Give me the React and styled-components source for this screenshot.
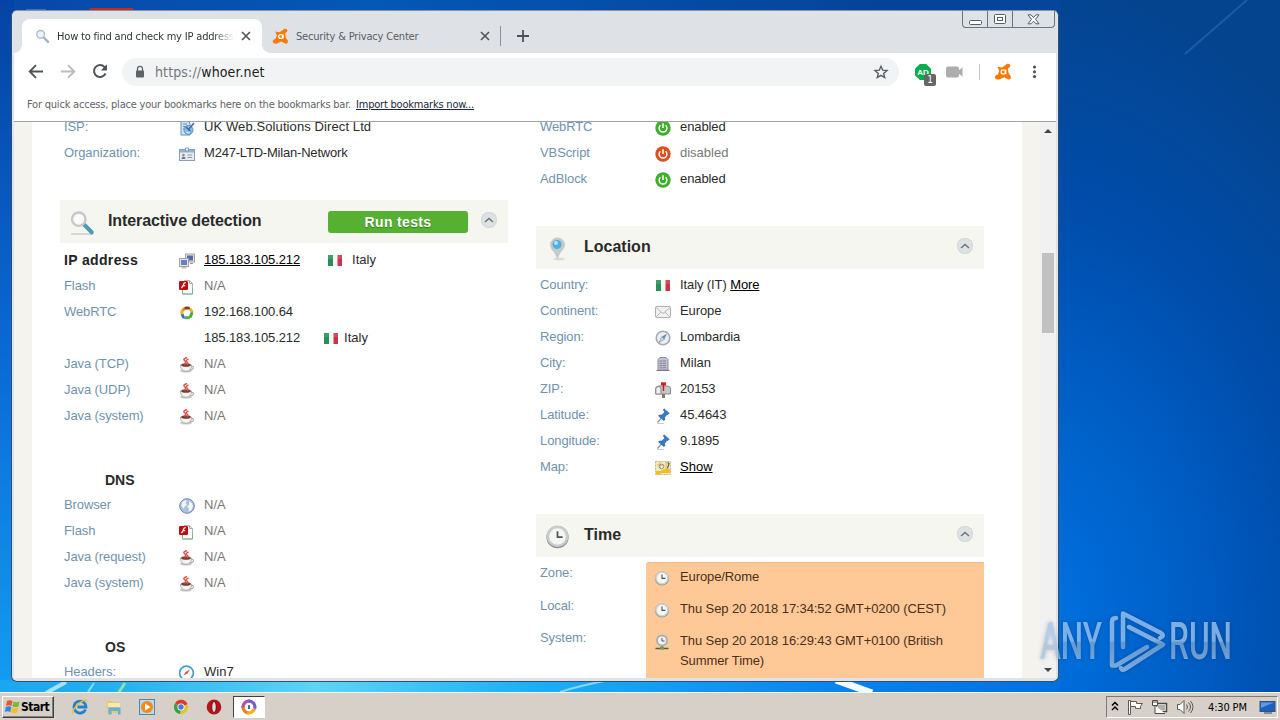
import React from "react";
import styled, {createGlobalStyle, css} from "styled-components";

const UI_FONT = `"DejaVu Sans Condensed", "DejaVu Sans", Tahoma, sans-serif`;
const PAGE_FONT = `"Liberation Sans", Arial, sans-serif`;

const GlobalStyle = createGlobalStyle`
    body {
        margin: 0;
        overflow: hidden;
        background: #0058b8;
    }
    * {
        box-sizing: border-box;
    }
`;

const Desktop = styled.div`
    position: relative;
    width: 1280px;
    height: 720px;
    overflow: hidden;
    display: flex;
    flex-direction: column;
    justify-content: flex-end;
    font-family: ${UI_FONT};
`;

const Wallpaper = styled.svg`
    position: absolute;
    inset: 0;
`;

const Window = styled.div`
    position: absolute;
    left: 11px;
    top: 10px;
    width: 1048px;
    height: 672px;
    display: flex;
    flex-direction: column;
    border: 1px solid #34506e;
    border-top-color: #8a929c;
    border-radius: 6px;
    background: #dfe3e8;
    padding: 0 2px 3px;
    overflow: hidden;
`;

/* tab strip */

const TabStrip = styled.div`
    height: 42px;
    flex: none;
    display: flex;
    align-items: flex-end;
    padding-left: 8px;
    margin: 0 -2px;
    padding-right: 3px;
    background: #dee1e6;
    font-size: 11px;
    letter-spacing: -0.18px;
    color: #5a5e64;
`;

const Tab = styled.div`
    position: relative;
    height: 34px;
    display: flex;
    align-items: center;
    width: ${p => p.$width}px;
    padding: 0 ${p => p.$active ? 11 : 10}px 0 ${p => p.$active ? 13 : 10}px;
    gap: 7px;
    ${p => p.$active && css`
        background: #fff;
        color: #303438;
        border-radius: 8px 8px 0 0;
        margin-left: 2px;
        &::before, &::after {
            content: "";
            position: absolute;
            bottom: 0;
            width: 8px;
            height: 8px;
        }
        &::before {
            left: -8px;
            background: radial-gradient(circle at 0 0, transparent 7.5px, #fff 8px);
        }
        &::after {
            right: -8px;
            background: radial-gradient(circle at 100% 0, transparent 7.5px, #fff 8px);
        }
    `}
`;

const TabTitle = styled.span`
    flex: 1;
    overflow: hidden;
    white-space: nowrap;
    ${p => p.$fade && css`
        mask-image: linear-gradient(90deg, #000 88%, transparent 100%);
    `}
`;

const NewTab = styled.div`
    height: 34px;
    width: 46px;
    display: flex;
    align-items: center;
    gap: 15px;
    &::before {
        content: "";
        width: 1px;
        height: 20px;
        background: #8d9197;
    }
`;

const WindowButtons = styled.div`
    align-self: flex-start;
    margin-left: auto;
    display: flex;
    height: 17px;
    border: 1px solid #6f757e;
    border-top: 0;
    border-radius: 0 0 4px 4px;
`;

const WindowButton = styled.div`
    width: ${p => p.$width}px;
    display: flex;
    align-items: center;
    justify-content: center;
    & + & {
        border-left: 1px solid #6f757e;
    }
`;

/* toolbar */

const Toolbar = styled.div`
    height: 37px;
    flex: none;
    display: flex;
    align-items: center;
    background: #fff;
    padding: 0 12px 0 12px;
    svg {
        flex: none;
    }
`;

const Nav = styled.div`
    display: flex;
    gap: 12px;
    width: 96px;
`;

const Omnibox = styled.div`
    height: 28px;
    width: 777px;
    display: flex;
    align-items: center;
    background: #f1f3f4;
    border-radius: 14px;
    padding: 0 9px 0 10px;
    font-size: 14px;
    letter-spacing: ${p => p.$track}px;
    color: #1c1e20;
`;

const Address = styled.span`
    flex: 1;
    margin-left: 7px;
`;

const Scheme = styled.span`
    color: #74787d;
`;

const Extensions = styled.div`
    display: flex;
    align-items: center;
    padding-left: 15px;
`;

const AdBlockButton = styled.div`
    position: relative;
    width: 32px;
    height: 18px;
`;

const Badge = styled.span`
    position: absolute;
    left: 10px;
    top: 11px;
    width: 12px;
    height: 12px;
    border-radius: 2px;
    background: #666;
    color: #fff;
    font-size: 10px;
    line-height: 12px;
    text-align: center;
`;

const Divider = styled.span`
    width: 1px;
    height: 16px;
    margin: 0 14px 0 15px;
    background: #c4c6c9;
`;

const MenuDots = styled.svg`
    margin-left: 14px;
    fill: #505459;
`;

const BookmarksBar = styled.div`
    height: 32px;
    flex: none;
    background: #fff;
    border-bottom: 1px solid #a3a3a3;
    padding: 7px 13px 0;
    font-size: 11px;
    line-height: 16px;
    letter-spacing: ${p => p.$track}px;
    color: #5f6368;
`;

const ImportLink = styled.span`
    margin-left: 5px;
    color: #20263a;
    text-decoration: underline;
`;

/* page */

const Viewport = styled.div`
    flex: 1;
    min-height: 0;
    display: flex;
    background: #f5f3ee;
    overflow: hidden;
    font-family: ${PAGE_FONT};
    font-size: 13px;
    color: #2b2b2b;
`;

const Sheet = styled.div`
    width: 990px;
    margin: 0 18px;
    padding: 0 38px 0 28px;
    display: flex;
    gap: 28px;
    background: #fff;
`;

const Column = styled.div`
    width: 448px;
    flex: none;
`;

const Pulled = styled.div`
    margin-top: -8px;
    margin-bottom: ${p => p.$gap}px;
`;

const Row = styled.div`
    display: grid;
    grid-template-columns: 115px 25px auto 1fr;
    height: 26px;
    align-items: center;
    padding-left: 4px;
    line-height: 20px;
    white-space: nowrap;
    svg {
        margin-top: 1px;
    }
`;

const Label = styled.span`
    color: ${p => p.$strong ? "#222" : "#6f93ad"};
    font-size: ${p => p.$strong ? 14 : 13}px;
    font-weight: ${p => p.$strong ? 700 : 400};
    letter-spacing: ${p => p.$strong ? 0.35 : -0.1}px;
`;

const Value = styled.span`
    color: ${p => p.$muted ? "#777" : "#2b2b2b"};
    letter-spacing: ${p => p.$track || 0}px;
`;

const Link = styled.span`
    color: #000;
    text-decoration: underline;
    text-underline-offset: 1px;
`;

const Country = styled.span`
    display: flex;
    align-items: center;
    gap: ${p => p.$gap}px;
    margin-left: ${p => p.$left}px;
`;

const Header = styled.div`
    height: 43px;
    display: flex;
    align-items: center;
    background: #f6f6f1;
    padding: 0 11px 3px 9px;
    margin-bottom: ${p => p.$after}px;
`;

const HeaderIcon = styled.span`
    display: flex;
    width: 39px;
    padding-top: 5px;
`;

const Title = styled.span`
    flex: 1;
    padding-top: 2px;
    font-size: 16px;
    font-weight: 700;
    letter-spacing: ${p => p.$track || 0}px;
    color: #2a2a2a;
`;

const RunButton = styled.div`
    width: 140px;
    height: 22px;
    margin: 3px 13px 0 0;
    border-radius: 3px;
    background: #56b032;
    color: #fff;
    font-size: 14px;
    font-weight: 700;
    letter-spacing: 0.35px;
    line-height: 23px;
    text-align: center;
    text-shadow: 0 1px 1px #3a7d20;
`;

const Collapse = styled.span`
    display: flex;
    align-items: center;
    justify-content: center;
    width: 16px;
    height: 16px;
    border-radius: 50%;
    background: #dfe2e4;
    box-shadow: inset 0 0 2px #bcc0c3;
`;

const SubTitle = styled.div`
    height: 22px;
    line-height: 20px;
    margin: ${p => p.$before}px 0 0 45px;
    font-size: 14px;
    font-weight: 700;
`;

const TimeGrid = styled.div`
    display: grid;
    grid-template-columns: 110px 1fr;
`;

const TimeLabels = styled.div`
    display: flex;
    flex-direction: column;
    gap: 12.5px;
    padding: 1px 0 0 4px;
    line-height: 20px;
`;

const Warning = styled.div`
    height: 130px;
    padding: 4px 8px;
    background: #ffc997;
    border-top: 1px solid #efb888;
    border-radius: 3px 0 0 0;
    display: flex;
    flex-direction: column;
    gap: 12px;
    color: #4a2f1a;
    letter-spacing: -0.1px;
`;

const TimeRow = styled.div`
    display: flex;
    gap: 10px;
    line-height: 20px;
    svg {
        flex: none;
        margin-top: 3px;
    }
`;

const Scrollbar = styled.div`
    width: 16px;
    background: #f1f1f1;
    display: flex;
    flex-direction: column;
    align-items: center;
    padding: 6px 0 5px;
`;

const Thumb = styled.div`
    width: 12px;
    height: 80px;
    margin-top: 119px;
    margin-bottom: auto;
    background: #c1c1c1;
`;

/* taskbar */

const Taskbar = styled.div`
    position: relative;
    height: 28px;
    display: flex;
    align-items: center;
    background: #d6d0c8;
    border-top: 1px solid #f7f5f0;
    padding: 1px 2px 0;
    font-size: 11px;
    color: #000;
`;

const StartButton = styled.div`
    width: 52px;
    height: 22px;
    display: flex;
    align-items: center;
    gap: 0;
    padding-left: 1px;
    border: 1px solid;
    border-color: #fff #404040 #404040 #fff;
    box-shadow: inset -1px -1px #858078;
    font-weight: 700;
    font-size: 12px;
    letter-spacing: -0.5px;
`;

const QuickLaunch = styled.div`
    display: flex;
    align-items: center;
    gap: 17.5px;
    margin-left: 18px;
`;

const ActiveTask = styled.div`
    width: 32px;
    height: 22px;
    display: flex;
    align-items: center;
    justify-content: center;
    margin-left: 11px;
    background: #fff;
    border: 1px solid;
    border-color: #404040 #fff #fff #404040;
`;

const Tray = styled.div`
    width: 172px;
    height: 22px;
    margin-left: auto;
    display: flex;
    align-items: center;
    gap: 7.5px;
    padding: 0 1px 0 4px;
    border: 1px solid;
    border-color: #807b73 #fff #fff #807b73;
`;

const Clock = styled.span`
    flex: 1;
    padding-left: 7px;
    letter-spacing: -0.15px;
    white-space: nowrap;
`;

const Watermark = styled.svg`
    position: absolute;
    left: 1030px;
    top: 604px;
    filter: drop-shadow(0 0 2px rgba(0, 0, 0, 0.3));
`;

function Svg({size = 16, box, children}){
    return <svg width={size} height={size} viewBox={`0 0 ${box || size} ${box || size}`} fill="none">{children}</svg>;
}

function Avast({size = 18}){
    return <Svg size={size} box={18}>
        <path d="M3.5 3.8 8 4.6 13.2.8q2.6-.6 3.2 1.6.2 1.6-2.4 3.2l.3 4 2.5 3.8q.4 2.8-2.4 3.2l-4.2-2.4-5 2.200q-3.600.8-4.400-1.600-.1-2.400 3.200-3.600L5.200 8Z" fill="#ff7800"/>
        <circle cx="9.200" cy="9" r="2.100" stroke="#fff" strokeWidth="1.300"/>
        <path d="M11.800 6.600v4.600" stroke="#fff" strokeWidth="1.200"/>
    </Svg>;
}

function Magnifier({size, soft}){
    return <Svg size={size} box={24}>
        {!soft && <path d="M2 22.200h20" stroke="#c9cccb" strokeWidth="1.400"/>}
        <path d="m13.500 13 7.500 7.600" stroke={soft ? "#a7b3c2" : "#4d9bb5"} strokeWidth="3.800" strokeLinecap="round"/>
        <circle cx="9" cy="8.500" r="6.200" fill={soft ? "#e8f3fb" : "#fafafa"} stroke={soft ? "#aebccb" : "#c6c9ca"} strokeWidth="2.200"/>
    </Svg>;
}

function ClockFace({size = 16}){
    return <Svg size={size} box={16}>
        <circle cx="8" cy="8.400" r="7.100" fill="#8c9192"/>
        <circle cx="8" cy="7.800" r="6.900" fill="#c9cccc"/>
        <circle cx="8" cy="8" r="5.300" fill="#f5f6f4"/>
        <path d="M8 4.600v3.800h3.300" stroke="#4c5555" strokeWidth="1.100"/>
    </Svg>;
}

function Icon({name}){
    switch(name){
        case "isp":
            return <Svg>
                <path d="M2 1h7l2 2v12H2Z" fill="#cfe3f3" stroke="#5c8fbf"/>
                <path d="M4 4h4M4 6.500h4M4 9h3" stroke="#5c8fbf"/>
                <circle cx="9.500" cy="10" r="4.500" fill="#8dbbe4" stroke="#5b92c8"/>
                <path d="m7 7 5 5m3-9-5 6" stroke="#3a6ea5" strokeWidth="1.600"/>
                <path d="M7.500 12.500q2 1 4-1" stroke="#e6f2fb"/>
            </Svg>;
        case "card":
            return <Svg>
                <rect x=".5" y="3.500" width="15" height="11" fill="#e3ebf2" stroke="#8ba0b5"/>
                <path d="M1 4h14v2.500H1Z" fill="#8db4da"/>
                <path d="M6.500 2h3v3h-3Z" fill="#fff" stroke="#8296ab"/>
                <circle cx="4.500" cy="9" r="1.200" fill="#b07a50"/>
                <path d="M2.500 13q0-2.500 2-2.500t2 2.500" fill="#71777e"/>
                <path d="M8.500 9H13M8.500 11.500H13" stroke="#8d99a5"/>
            </Svg>;
        case "network":
            return <Svg>
                <rect x="6.500" y="1" width="9" height="8" fill="#e4e5e2" stroke="#a0a39f"/>
                <rect x="8" y="2.500" width="6" height="5" fill="#4f6cae"/>
                <rect x=".5" y="5.500" width="9" height="8" fill="#e6e7e5" stroke="#a0a39f"/>
                <rect x="2" y="7" width="6" height="5" fill="#6a80c2"/>
                <path d="M2.500 14.800h5M11 10.500h3" stroke="#9a9d98"/>
            </Svg>;
        case "flash":
            return <Svg>
                <path d="M5 1.500h5.500l3 3v10.500H3.500V4" fill="#fff" stroke="#b1b4b5"/>
                <path d="M10.500 1.500v3h3" stroke="#c2a0a0"/>
                <path d="M3.500 11v4h10v-6" stroke="#7fb18b"/>
                <rect x="0" y="2" width="9" height="9" rx="1.200" fill="#c40c0c"/>
                <path d="M6.800 3.700Q5 3.500 4.500 5.500T2.300 9M3.800 6.600h2.300" stroke="#fff" strokeWidth="1.200"/>
            </Svg>;
        case "webrtc":
            return <Svg>
                <g strokeWidth="3" strokeLinecap="round">
                    <path d="M4 5 5.500 3.500" stroke="#e2862a"/>
                    <path d="M11.500 4.500 12.800 6.500" stroke="#e0b52c"/>
                    <path d="M12.700 8.500 11.500 11.500" stroke="#4aaa43"/>
                    <path d="M9.500 12.700H6.500" stroke="#58ab4c"/>
                    <path d="M4.300 12 3.200 9.500" stroke="#3172c5"/>
                    <path d="M3 8V6" stroke="#f2ae1f"/>
                    <path d="M7 3h2.500" stroke="#9b3020"/>
                </g>
            </Svg>;
        case "java":
            return <Svg>
                <ellipse cx="7" cy="14" rx="6" ry="1.600" fill="#c9c9c9"/>
                <path d="M11 9.500q4-.8 3.300 1.700-.8 1.700-4 1.500" stroke="#adadad" strokeWidth="1.200"/>
                <path d="M1.500 8h11q.3 6-5.500 6.300Q1.500 14 1.500 8Z" fill="#f4f4f4" stroke="#acacac"/>
                <ellipse cx="7" cy="8" rx="4.800" ry="1.800" fill="#714034"/>
                <path d="M8 .5Q3.500 2 5.500 3.500T5.500 7.500M9.500 2Q6 3.500 8 5T8 7.500" stroke="#e4544b" strokeWidth="1.500"/>
            </Svg>;
        case "globe":
            return <Svg>
                <circle cx="8" cy="8" r="7.300" fill="#a9c0de" stroke="#7589a7"/>
                <path d="M3 4q3-2.500 5-1.500L6.500 5 8 7 5.500 8.500 5 11 2.500 8Zm7-1 3 2 1 3.500-2 4-2.500 1 .5-3-2-2L10 7Z" fill="#f2f6fb"/>
            </Svg>;
        case "gauge":
            return <Svg>
                <circle cx="7.500" cy="8" r="6.900" fill="#f6fcff" stroke="#4a9fc0" strokeWidth="1.700"/>
                <path d="m4.500 10.500 2-3.500L11 4.500 8.500 8.500Z" fill="#df5548"/>
            </Svg>;
        case "on":
        case "off":
            return <Svg>
                <circle cx="8" cy="8" r="7.700" fill={name === "on" ? "#3faf2b" : "#d9501d"}/>
                <path d="M5.400 5.300a3.900 3.900 0 1 0 5.200 0M8 3.300V8" stroke="#fff" strokeWidth="1.500"/>
            </Svg>;
        case "flag":
            return <Svg>
                <path d="M1 2h5v11H1Z" fill="#26905a"/>
                <path d="M6 2h4.500v11H6Z" fill="#f5f5f3"/>
                <path d="M10.500 2H15v11h-4.500Z" fill="#c93548"/>
                <path d="M1 2h14v4H1Z" fill="#fff" opacity=".12"/>
            </Svg>;
        case "mail":
            return <Svg>
                <rect x=".5" y="2.500" width="15" height="11" rx="1" fill="#f2f2f1" stroke="#b0b2b2"/>
                <path d="m1 3.500 7 6 7-6M1 13l5-5m9 5-5-5" stroke="#b6b9b9"/>
            </Svg>;
        case "compass":
            return <Svg>
                <circle cx="8" cy="8" r="6.800" fill="#eceeef" stroke="#a7abae" strokeWidth="1.600"/>
                <path d="m12 3.500-5.200 3.300L4 12.500l5.400-3.300Z" fill="#5f92c3"/>
                <path d="m6.800 6.800 2.600 2.400L4 12.500Z" fill="#d6d9da" stroke="#8896a2" strokeWidth=".6"/>
            </Svg>;
        case "building":
            return <Svg>
                <path d="M3 3.500 5 1.500h6L13 3.500V14H3Z" fill="#c3c2d2" stroke="#8c8ba0"/>
                <path d="M4.500 5h7M4.500 7.300h7M4.500 9.600h7M4.500 11.800h7" stroke="#7d7c96" strokeDasharray="3 .5"/>
                <path d="M1.500 14.500h13" stroke="#77788a"/>
            </Svg>;
        case "mailbox":
            return <Svg>
                <path d="M.5 12V7q.3-3 3-3h9q3 0 3 3v5Z" fill="#c5c8c6" stroke="#888d8c"/>
                <path d="M.8 12V7q.3-2.500 2.700-2.500T6 7v5Z" fill="#eef0ef" stroke="#888d8c"/>
                <path d="M7 12h3v4H7Z" fill="#95705d"/>
                <path d="M8.500 9V1" stroke="#c31818" strokeWidth="1.400"/>
                <path d="M6 .3h5v3.200H6Z" fill="#dd2020"/>
            </Svg>;
        case "pin":
            return <Svg>
                <path d="M2 15.500h7" stroke="#c8cdd2"/>
                <path d="m2.500 14.500 4-4.500" stroke="#8a97a4" strokeWidth="1.200"/>
                <path d="m9 .8 5.200 4.400-1.300 1.300-1-.1-2.300 3 .3 2.300-1 .8L3.500 8l.9-1 2.500.1 2.700-2.800-.3-1.200-1-1Z" fill="#3479cf" stroke="#2459a0" strokeWidth=".6"/>
            </Svg>;
        case "map":
            return <Svg>
                <rect x=".5" y="1.500" width="15" height="13" fill="#f3e9bd" stroke="#c5b98b" strokeDasharray="2 1"/>
                <path d="M1 11h5l3-2h6v4H6l-1 1.500H1Z" fill="#f0c022"/>
                <path d="M11 2v8M2 5h7M5 2v6" stroke="#d4b44e"/>
                <path d="m12.500 2.500 1.500 1-1.500 5" stroke="#555f47" strokeWidth="1.200"/>
                <circle cx="6.500" cy="6.500" r="2.300" stroke="#9e9682"/>
            </Svg>;
        case "clock":
            return <ClockFace/>;
        case "syncclock":
            return <Svg>
                <path d="M8 11v4M1.500 14.500h13" stroke="#555d52" strokeWidth="1.400"/>
                <rect x="6" y="12.500" width="4" height="3" fill="#6aa04a"/>
                <circle cx="8" cy="6.500" r="6" fill="#aab0b4"/>
                <circle cx="8" cy="6.500" r="4" fill="#eef2f5"/>
                <path d="M8 4v3h2.500" stroke="#4e565b"/>
            </Svg>;
        default:
            return <span/>;
    }
}

function InfoRow({label, icon, muted, track, strong, extra, children}){
    return <Row>
        <Label $strong={strong}>{label}</Label>
        <Icon name={icon}/>
        <Value $muted={muted} $track={track}>{children || "N/A"}</Value>
        {extra}
    </Row>;
}

function CollapseButton(){
    return <Collapse>
        <svg width="10" height="6" viewBox="0 0 10 6" fill="none">
            <path d="m1 5 4-3.500L9 5" stroke="#6a7276" strokeWidth="1.400"/>
        </svg>
    </Collapse>;
}

function CloseX(){
    return <Svg size={10}><path d="m1 1 8 8M9 1 1 9" stroke="#54585d" strokeWidth="1.700"/></Svg>;
}

function Tabs(){
    return <TabStrip>
        <Tab $active $width={240}>
            <Magnifier size={15} soft/>
            <TabTitle $fade>How to find and check my IP address</TabTitle>
            <CloseX/>
        </Tab>
        <Tab $width={238}>
            <Avast size={17}/>
            <TabTitle>Security &amp; Privacy Center</TabTitle>
            <CloseX/>
        </Tab>
        <NewTab>
            <Svg size={14}><path d="M7 1v12M1 7h12" stroke="#4e5257" strokeWidth="1.800"/></Svg>
        </NewTab>
        <WindowButtons>
            <WindowButton $width={24}>
                <svg width="13" height="15"><rect x=".5" y="8.500" width="12" height="4" rx="1" fill="#fff" stroke="#555b66"/></svg>
            </WindowButton>
            <WindowButton $width={25}>
                <svg width="12" height="11" fill="#fff" stroke="#555b66">
                    <rect x=".5" y=".5" width="11" height="9" rx="1"/>
                    <rect x="3.500" y="3.500" width="5" height="3"/>
                </svg>
            </WindowButton>
            <WindowButton $width={42}>
                <svg width="13" height="11" viewBox="0 0 13 11">
                    <path d="M1 .8h3l2.500 2.700L9 .8h3L8.500 5.300 12 9.800H9L6.500 7.200 4 9.800H1l3.500-4.500Z" fill="#fff" stroke="#555b66"/>
                </svg>
            </WindowButton>
        </WindowButtons>
    </TabStrip>;
}

function ToolbarRow(){
    return <Toolbar>
        <Nav>
            <Svg size={20}><path d="M17 9.500H4m6-6.300L3.700 9.500l6.300 6.300" stroke="#505459" strokeWidth="1.900"/></Svg>
            <Svg size={20}><path d="M3 9.500h13m-6-6.300 6.300 6.300-6.300 6.300" stroke="#b9bbbe" strokeWidth="1.900"/></Svg>
            <Svg size={20}>
                <path d="M15.500 11.500a6 6 0 1 1-1-6.500l1.500 1.600" stroke="#505459" strokeWidth="2"/>
                <path d="M17 2.300v6.200h-6.200Z" fill="#505459"/>
            </Svg>
        </Nav>
        <Omnibox $track={0.13}>
            <Svg>
                <rect x="4" y="6.500" width="8" height="7" rx="1" fill="#5f6368"/>
                <path d="M5.500 7V4.800a2.500 2.500 0 0 1 5 0V7" stroke="#5f6368" strokeWidth="1.300"/>
            </Svg>
            <Address><Scheme>https://</Scheme>whoer.net</Address>
            <Svg size={18}>
                <path d="m9 3.200 1.700 4 4.300.4-3.300 2.800 1 4.200L9 12.400l-3.700 2.200 1-4.200L3 7.600l4.300-.4Z" stroke="#5b5f64" strokeWidth="1.400"/>
            </Svg>
        </Omnibox>
        <Extensions>
            <AdBlockButton>
                <Svg size={18}>
                    <path d="M5.800 1h6.400L17 5.800v6.400L12.200 17H5.800L1 12.200V5.800Z" fill="#08ad4e"/>
                    <text x="9" y="12" fontSize="8" fontWeight="700" textAnchor="middle" fill="#fff" fontFamily="Liberation Sans">AD</text>
                </Svg>
                <Badge>1</Badge>
            </AdBlockButton>
            <svg width="18" height="14" viewBox="0 0 18 14">
                <rect x="0" y="1.500" width="13" height="11" rx="2" fill="#adadad"/>
                <path d="m12 6 4.500-3.500v9L12 8Z" fill="#adadad"/>
            </svg>
            <Divider/>
            <Avast/>
            <MenuDots width="18" height="18" viewBox="0 0 18 18">
                <circle cx="8.500" cy="4" r="1.600"/><circle cx="8.500" cy="8.800" r="1.600"/><circle cx="8.500" cy="13.600" r="1.600"/>
            </MenuDots>
        </Extensions>
    </Toolbar>;
}

function LeftColumn(){
    return <Column>
        <Pulled $gap={34}>
            <InfoRow label="ISP:" icon="isp" track={0.1}>UK Web.Solutions Direct Ltd</InfoRow>
            <InfoRow label="Organization:" icon="card" track={-0.2}>M247-LTD-Milan-Network</InfoRow>
        </Pulled>
        <Header $after={4}>
            <HeaderIcon><Magnifier size={26}/></HeaderIcon>
            <Title $track={-0.1}>Interactive detection</Title>
            <RunButton>Run tests</RunButton>
            <CollapseButton/>
        </Header>
        <InfoRow label="IP address" icon="network" strong track={-0.1}
            extra={<Country $left={27} $gap={9}><Icon name="flag"/>Italy</Country>}>
            <Link>185.183.105.212</Link>
        </InfoRow>
        <InfoRow label="Flash" icon="flash" muted/>
        <InfoRow label="WebRTC" icon="webrtc" track={-0.1}>192.168.100.64</InfoRow>
        <InfoRow track={-0.1} extra={<Country $left={23} $gap={5}><Icon name="flag"/>Italy</Country>}>
            185.183.105.212
        </InfoRow>
        <InfoRow label="Java (TCP)" icon="java" muted/>
        <InfoRow label="Java (UDP)" icon="java" muted/>
        <InfoRow label="Java (system)" icon="java" muted/>
        <SubTitle $before={41}>DNS</SubTitle>
        <InfoRow label="Browser" icon="globe" muted/>
        <InfoRow label="Flash" icon="flash" muted/>
        <InfoRow label="Java (request)" icon="java" muted/>
        <InfoRow label="Java (system)" icon="java" muted/>
        <SubTitle $before={41}>OS</SubTitle>
        <InfoRow label="Headers:" icon="gauge">Win7</InfoRow>
    </Column>;
}

function RightColumn(){
    return <Column>
        <Pulled $gap={34}>
            <InfoRow label="WebRTC" icon="on" track={-0.1}>enabled</InfoRow>
            <InfoRow label="VBScript" icon="off" muted>disabled</InfoRow>
            <InfoRow label="AdBlock" icon="on" track={-0.1}>enabled</InfoRow>
        </Pulled>
        <Header $after={3}>
            <HeaderIcon>
                <Svg size={26}>
                    <ellipse cx="14" cy="23" rx="6" ry="1.500" fill="#dcdcd8"/>
                    <path d="M12.500 24Q11 18 6.500 13.500 3 7 8 3q5-3 9.500.5Q22 7.500 18.500 13 13.500 18 12.500 24Z" fill="#c6c9ca"/>
                    <circle cx="12" cy="8.500" r="4.500" fill="#4ab0e2"/>
                    <circle cx="11" cy="7" r="2" fill="#b7e4f7"/>
                </Svg>
            </HeaderIcon>
            <Title>Location</Title>
            <CollapseButton/>
        </Header>
        <InfoRow label="Country:" icon="flag" track={-0.1}>Italy (IT) <Link>More</Link></InfoRow>
        <InfoRow label="Continent:" icon="mail" track={-0.1}>Europe</InfoRow>
        <InfoRow label="Region:" icon="compass" track={-0.15}>Lombardia</InfoRow>
        <InfoRow label="City:" icon="building">Milan</InfoRow>
        <InfoRow label="ZIP:" icon="mailbox" track={-0.15}>20153</InfoRow>
        <InfoRow label="Latitude:" icon="pin" track={-0.1}>45.4643</InfoRow>
        <InfoRow label="Longitude:" icon="pin" track={-0.1}>9.1895</InfoRow>
        <InfoRow label="Map:" icon="map"><Link>Show</Link></InfoRow>
        <Pulled $gap={42}/>
        <Header $after={5}>
            <HeaderIcon><ClockFace size={25}/></HeaderIcon>
            <Title>Time</Title>
            <CollapseButton/>
        </Header>
        <TimeGrid>
            <TimeLabels>
                <Label>Zone:</Label>
                <Label>Local:</Label>
                <Label>System:</Label>
            </TimeLabels>
            <Warning>
                <TimeRow><Icon name="clock"/>Europe/Rome</TimeRow>
                <TimeRow><Icon name="clock"/>Thu Sep 20 2018 17:34:52 GMT+0200 (CEST)</TimeRow>
                <TimeRow><Icon name="syncclock"/>Thu Sep 20 2018 16:29:43 GMT+0100 (British<br/>Summer Time)</TimeRow>
            </Warning>
        </TimeGrid>
    </Column>;
}

function Background(){
    return <Wallpaper width="1280" height="720">
        <defs>
            <linearGradient id="side" x1="0" y1="0" x2="0" y2="1">
                <stop offset="0" stopColor="#0543a3"/>
                <stop offset=".5" stopColor="#0a6ad6"/>
                <stop offset="1" stopColor="#14a2f4"/>
            </linearGradient>
            <linearGradient id="top" x1="0" y1="0" x2="1" y2="0">
                <stop offset="0" stopColor="#0847a8"/>
                <stop offset=".35" stopColor="#0458b6"/>
                <stop offset=".83" stopColor="#05439a"/>
                <stop offset="1" stopColor="#05459b"/>
            </linearGradient>
            <radialGradient id="right" gradientUnits="userSpaceOnUse" cx="0" cy="0" r="1"
                gradientTransform="translate(1020 620) scale(440 640)">
                <stop offset="0" stopColor="#0074e4"/>
                <stop offset=".35" stopColor="#0060c8"/>
                <stop offset=".65" stopColor="#004dab"/>
                <stop offset="1" stopColor="#04448f"/>
            </radialGradient>
            <linearGradient id="bottom" x1="0" y1="0" x2="1" y2="0">
                <stop offset="0" stopColor="#1ca6f0"/>
                <stop offset=".1" stopColor="#22b0ee"/>
                <stop offset=".3" stopColor="#5cd5f4"/>
                <stop offset=".5" stopColor="#1bb0f5"/>
                <stop offset=".8" stopColor="#0a82ee"/>
                <stop offset="1" stopColor="#0070e0"/>
            </linearGradient>
        </defs>
        <rect width="1280" height="720" fill="url(#right)"/>
        <rect width="1060" height="12" fill="url(#top)"/>
        <rect width="14" height="720" fill="url(#side)"/>
        <rect y="680" width="1060" height="40" fill="url(#bottom)"/>
        <path d="M1185 54 1247 0" stroke="#4a86c4" strokeWidth="2" opacity=".35"/>
        <path d="m46 693 20-11" stroke="#c6f3ff" strokeWidth="4" opacity=".8"/>
        <path d="m88 692 6-9" stroke="#a6e6fb" strokeWidth="2" opacity=".8"/>
        <path d="m119 692 6-9" stroke="#a4ee9c" strokeWidth="3" opacity=".8"/>
        <path d="M560 692q22-7 50-12" stroke="#8fd4ff" strokeWidth="2" fill="none"/>
        <path d="m836 680 36 13" stroke="#f2fbff" strokeWidth="7"/>
        <path d="M90 8h43v3H90Z" fill="#c8281e"/>
        <path d="M26 10h20" stroke="#7a9ccc"/>
    </Wallpaper>;
}

function Logo(){
    return <Watermark width="210" height="76" viewBox="0 0 210 76" fill="none">
        <defs>
            <linearGradient id="fade" gradientUnits="userSpaceOnUse" x1="0" y1="5" x2="0" y2="70">
                <stop offset="0" stopColor="#a6cdf5" stopOpacity=".75"/>
                <stop offset=".49" stopColor="#a6cdf5" stopOpacity=".75"/>
                <stop offset=".52" stopColor="#a3c1e0" stopOpacity=".6"/>
                <stop offset="1" stopColor="#a6cbf2" stopOpacity=".75"/>
            </linearGradient>
        </defs>
        <g fill="url(#fade)" fontFamily="Roboto, sans-serif" fontSize="51" fontWeight="500">
            <text x="10" y="55.300" textLength="62" lengthAdjust="spacingAndGlyphs">ANY</text>
            <text x="139" y="55.300" textLength="63" lengthAdjust="spacingAndGlyphs">RUN</text>
        </g>
        <g stroke="url(#fade)" strokeWidth="4.500" strokeLinecap="round" strokeLinejoin="round">
            <path d="M86 14q-4 0-4 4v43.500h4L117 43"/>
            <path d="M93 43V9.500L131 29q4 3-1 5"/>
            <path d="m99 23 34 17.500L95 65q-3 2-4-1"/>
        </g>
    </Watermark>;
}

function Bottom(){
    return <Taskbar>
        <StartButton>
            <svg width="17" height="16" viewBox="0 0 17 16">
                <path d="M3 2q3-1.500 5.500 0L7.500 7Q4.500 5.500 2 7Z" fill="#e35b2c"/>
                <path d="M9.500 2.500q3 1.500 6 0l-1 5q-3 1.200-6 0Z" fill="#78b93a"/>
                <path d="M1.800 8q3-1.500 5.500 0l-1 5Q3.500 11.500.8 13Z" fill="#3a83d8"/>
                <path d="M8.200 8.500q3 1.500 6 0l-1 5q-3 1.200-6 0Z" fill="#f4bd2b"/>
            </svg>
            Start
        </StartButton>
        <QuickLaunch>
            <Svg>
                <path d="M13.500 10.500A6 6 0 1 1 14 8H5.500" stroke="#2183d0" strokeWidth="2.800"/>
                <path d="M1.500 14.500Q-1 12 6 5.500T15 2" stroke="#efc22e" strokeWidth="1.500"/>
            </Svg>
            <Svg>
                <path d="M1 2h5l1.500 1.500H14V14H1Z" fill="#e6ca70"/>
                <path d="M2 4h12v4H2Z" fill="#fbeaa6"/>
                <path d="M2.500 15.500V8.500h12v7H12v-3.500H5.500v3.500Z" fill="#67aedb"/>
            </Svg>
            <Svg>
                <rect x=".5" y=".5" width="15" height="15" fill="#b9d9f2" stroke="#4c88be"/>
                <circle cx="8" cy="8" r="6" fill="#f28a14"/>
                <path d="M6 4.500 11.500 8 6 11.500Z" fill="#fff"/>
            </Svg>
            <Svg>
                <circle cx="8" cy="8" r="7" fill="#e4c22d"/>
                <path d="M8 8 2 4.300A7 7 0 0 1 14.500 5Z" fill="#d93c2c"/>
                <path d="M8 8 1.900 4.500A7 7 0 0 0 7 15Z" fill="#37a04a"/>
                <circle cx="8" cy="8" r="3.600" fill="#fff"/>
                <circle cx="8" cy="8" r="2.700" fill="#3e7fd9"/>
            </Svg>
            <Svg>
                <ellipse cx="8" cy="8" rx="7.300" ry="7.500" fill="#b5141c"/>
                <ellipse cx="8" cy="8" rx="2.300" ry="5.500" fill="#e8dada" stroke="#77080d"/>
            </Svg>
        </QuickLaunch>
        <ActiveTask>
            <Svg>
                <g strokeWidth="3.200">
                    <path d="M8 14a6 6 0 0 1-6-6.500" stroke="#f07a2a"/>
                    <path d="M2 8.500a6 6 0 0 1 7-6.400" stroke="#b04fa6"/>
                    <path d="M7 2.100a6 6 0 0 1 6.500 8.100" stroke="#7a5ad0"/>
                    <path d="M13.500 9.500A6 6 0 0 1 6 13.700" stroke="#f4af23"/>
                </g>
                <path d="M7.300 7.500h1.400l.3 2.500H7Z" fill="#3d4468"/>
                <circle cx="8" cy="7" r="1" fill="#3d4468"/>
            </Svg>
        </ActiveTask>
        <Tray>
            <svg width="8" height="12" viewBox="0 0 8 12" fill="none" stroke="#000" strokeWidth="1.500">
                <path d="m1 4.500 3-3 3 3M1 9l3-3 3 3"/>
            </svg>
            <svg width="17" height="16" viewBox="0 0 17 16" fill="#fff" stroke="#5d5a55">
                <path d="M1.500 1.500h2v14h-2Z"/><path d="M3.500 2.500h6v2h6q-3 3-2 5h-5v-2h-5Z"/>
            </svg>
            <svg width="17" height="16" viewBox="0 0 17 16" fill="#fff" stroke="#4d4a46">
                <path d="M5.500 4.500h10v8h-10Z" strokeWidth="1.500"/><path d="M7 6h7v5H7Z" fill="#b3b0aa" stroke="none"/>
                <path d="M1.500 1.500h5v5h-5ZM4 6.500v8h10M3 1v3M5 1v3"/>
            </svg>
            <svg width="18" height="16" viewBox="0 0 18 16" fill="#fff" stroke="#5d5a55">
                <path d="M1.500 5.500H4l4-4v13l-4-4H1.500Z"/>
                <path d="M10.500 5.500q2 2.500 0 5M12.500 3.500q4 4.500 0 9M14.500 2q5 6 0 12" fill="none"/>
            </svg>
            <Clock>4:30 PM</Clock>
            <svg width="17" height="16" viewBox="0 0 17 16">
                <rect x="1" y="2.500" width="15" height="10" fill="#1f5fbd" stroke="#33527e"/>
                <path d="M2 3.500h13L2 9Z" fill="#5f9ae4"/>
                <path d="M5 14h8" stroke="#444"/>
            </svg>
        </Tray>
    </Taskbar>;
}

export default function App(){
    return <Desktop>
        <GlobalStyle/>
        <Background/>
        <Window>
            <Tabs/>
            <ToolbarRow/>
            <BookmarksBar $track={-0.21}>
                For quick access, place your bookmarks here on the bookmarks bar.
                <ImportLink>Import bookmarks now...</ImportLink>
            </BookmarksBar>
            <Viewport>
                <Sheet>
                    <LeftColumn/>
                    <RightColumn/>
                </Sheet>
                <Scrollbar>
                    <svg width="8" height="6"><path d="M0 5 4 1l4 4Z" fill="#444"/></svg>
                    <Thumb/>
                    <svg width="8" height="6"><path d="m0 1 4 4 4-4Z" fill="#444"/></svg>
                </Scrollbar>
            </Viewport>
        </Window>
        <Bottom/>
        <Logo/>
    </Desktop>;
}
